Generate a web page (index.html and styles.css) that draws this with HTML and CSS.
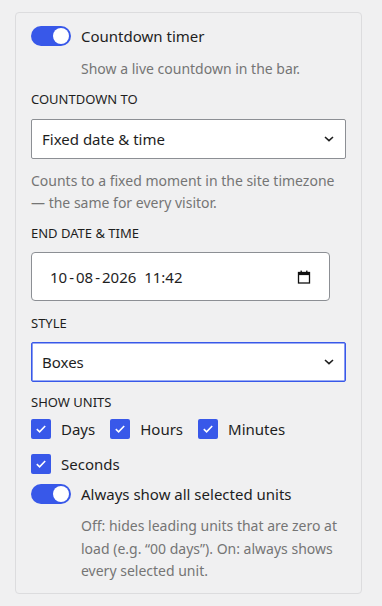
FILE: index.html
```html
<!DOCTYPE html>
<html lang="en">
<head>
  <meta charset="UTF-8" />
  <meta name="viewport" content="width=device-width, initial-scale=1.0" />
  <title>Countdown timer settings</title>
  <link rel="stylesheet" href="styles.css">
</head>
<body>
  <div class="panel">
    <div class="toggle-row">
      <span class="toggle on"><span class="knob"></span></span>
      <span class="toggle-label">Countdown timer</span>
    </div>
    <p class="help indent first">Show a live countdown in the bar.</p>

    <div class="label">COUNTDOWN TO</div>
    <div class="select">
      <span>Fixed date &amp; time</span>
      <svg width="10" height="6" viewBox="0 0 10 6"><path d="M1 1l4 3.6L9 1" fill="none" stroke="#1e1e1e" stroke-width="1.6"/></svg>
    </div>
    <p class="help block">Counts to a fixed moment in the site timezone — the same for every visitor.</p>

    <div class="label">END DATE &amp; TIME</div>
    <div class="date">
      <span class="date-text">10<i>-</i>08<i>-</i>2026&nbsp;&nbsp;11:42</span>
      <svg width="14" height="14" viewBox="0 0 14 14">
        <rect x="1.5" y="2.5" width="11" height="10.5" fill="none" stroke="#111" stroke-width="1.3"/>
        <rect x="1.5" y="2.5" width="11" height="2.6" fill="#111"/>
        <rect x="3.5" y="0.6" width="1.4" height="2.5" fill="#111"/>
        <rect x="9.1" y="0.6" width="1.4" height="2.5" fill="#111"/>
      </svg>
    </div>

    <div class="label after-date">STYLE</div>
    <div class="select focused">
      <span>Boxes</span>
      <svg width="10" height="6" viewBox="0 0 10 6"><path d="M1 1l4 3.6L9 1" fill="none" stroke="#1e1e1e" stroke-width="1.6"/></svg>
    </div>

    <div class="label after-style">SHOW UNITS</div>
    <div class="units">
      <label class="check"><span class="box"><svg width="12" height="10" viewBox="0 0 12 10"><path d="M1.8 5.2l2.8 2.6 5.6-5.8" fill="none" stroke="#fff" stroke-width="1.6"/></svg></span>Days</label>
      <label class="check"><span class="box"><svg width="12" height="10" viewBox="0 0 12 10"><path d="M1.8 5.2l2.8 2.6 5.6-5.8" fill="none" stroke="#fff" stroke-width="1.6"/></svg></span>Hours</label>
      <label class="check"><span class="box"><svg width="12" height="10" viewBox="0 0 12 10"><path d="M1.8 5.2l2.8 2.6 5.6-5.8" fill="none" stroke="#fff" stroke-width="1.6"/></svg></span>Minutes</label>
      <label class="check"><span class="box"><svg width="12" height="10" viewBox="0 0 12 10"><path d="M1.8 5.2l2.8 2.6 5.6-5.8" fill="none" stroke="#fff" stroke-width="1.6"/></svg></span>Seconds</label>
    </div>

    <div class="toggle-row second">
      <span class="toggle on"><span class="knob"></span></span>
      <span class="toggle-label">Always show all selected units</span>
    </div>
    <p class="help indent last">Off: hides leading units that are zero at load (e.g. “00 days”). On: always shows every selected unit.</p>
  </div>
</body>
</html>
```

FILE: styles.css
```css
body {
  margin: 0;
  padding: 12px 20px 13px 15px;
  background-color: #f0f0f1;
  font-family: "Noto Sans", "Open Sans", sans-serif;
  color: #1e1e1e;
}
.panel {
  border: 1px solid #dcdcde;
  border-radius: 4px;
  background-color: #f0f0f1;
  padding: 13px 15px 10px 15px;
}
.toggle-row {
  display: flex;
  align-items: center;
  gap: 10px;
  height: 20px;
}
.toggle-row.second {
  margin-top: 10px;
}
.toggle {
  display: flex;
  align-items: center;
  justify-content: flex-end;
  width: 40px;
  height: 20px;
  padding: 0 2px;
  box-sizing: border-box;
  border-radius: 10px;
  background-color: #3858e9;
}
.knob {
  width: 16px;
  height: 16px;
  border-radius: 50%;
  background-color: #fff;
}
.toggle-label {
  font-size: 15px;
}
.help {
  margin: 0;
  font-size: 14px;
  line-height: 22px;
  color: #757575;
}
.help.indent {
  padding-left: 50px;
}
.help.first {
  margin-top: 12px;
}
.help.block {
  margin-top: 11px;
}
.help.last {
  margin-top: 11px;
  line-height: 22.5px;
}
.label {
  margin-top: 9px;
  font-size: 13px;
  line-height: 20px;
}
.label.after-date {
  margin-top: 12px;
}
.label.after-style {
  margin-top: 10px;
}
.select {
  display: flex;
  justify-content: space-between;
  align-items: center;
  height: 40px;
  margin-top: 10px;
  padding: 0 11px 0 10px;
  box-sizing: border-box;
  border: 1px solid #8c8f94;
  border-radius: 2px;
  background-color: #fff;
  font-size: 15px;
}
.select.focused {
  margin-top: 9px;
  border-color: #3858e9;
  box-shadow: inset 0 0 0 0.6px #3858e9;
}
.date {
  display: flex;
  justify-content: space-between;
  align-items: center;
  width: 299px;
  height: 49px;
  margin-top: 9px;
  padding: 0 18px 0 18px;
  box-sizing: border-box;
  border: 1px solid #8c8f94;
  border-radius: 4px;
  background-color: #fff;
  font-size: 15px;
}
.date-text i {
  font-style: normal;
  padding: 0 2px;
}
.units {
  display: flex;
  flex-wrap: wrap;
  gap: 15px;
  margin-top: 7px;
}
.check {
  display: flex;
  align-items: center;
  gap: 10px;
  height: 20px;
  font-size: 15px;
}
.box {
  display: flex;
  align-items: center;
  justify-content: center;
  width: 20px;
  height: 20px;
  border-radius: 2px;
  background-color: #3858e9;
}
```
